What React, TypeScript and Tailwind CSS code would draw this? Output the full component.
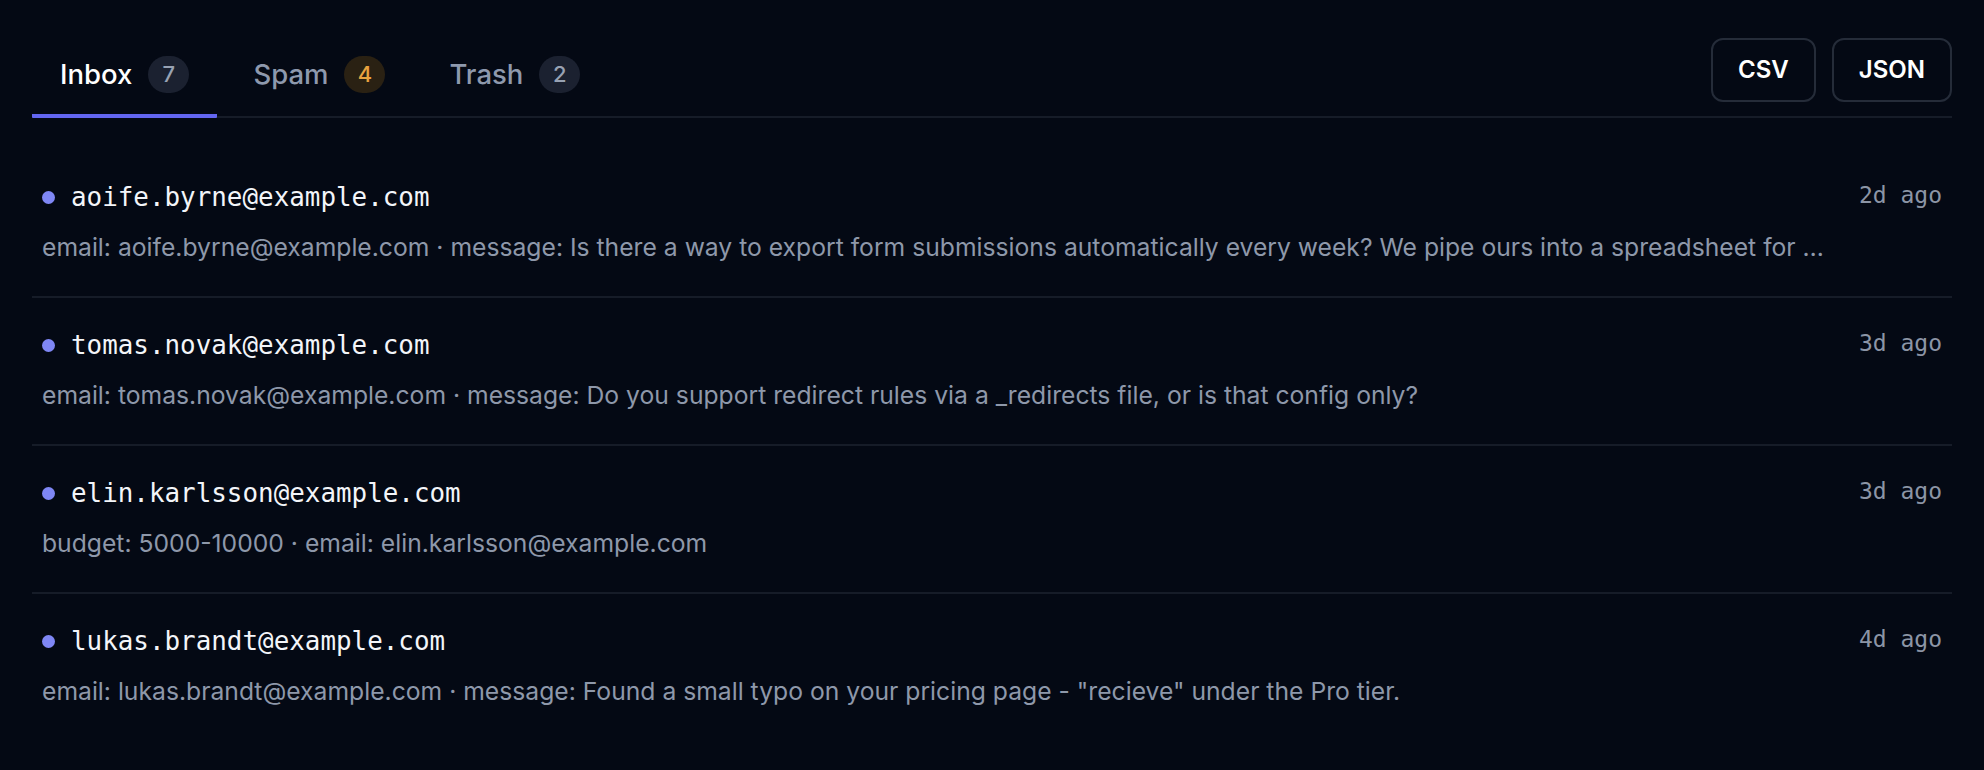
import React from "react";

type Tab = { label: string; count: number; tone: "neutral" | "amber" };

const tabs: Tab[] = [
  { label: "Inbox", count: 7, tone: "neutral" },
  { label: "Spam", count: 4, tone: "amber" },
  { label: "Trash", count: 2, tone: "neutral" },
];

type Submission = { id: number; from: string; summary: string; age: string };

const submissions: Submission[] = [
  {
    id: 1,
    from: "aoife.byrne@example.com",
    summary:
      "email: aoife.byrne@example.com · message: Is there a way to export form submissions automatically every week? We pipe ours into a spreadsheet for …",
    age: "2d ago",
  },
  {
    id: 2,
    from: "tomas.novak@example.com",
    summary:
      "email: tomas.novak@example.com · message: Do you support redirect rules via a _redirects file, or is that config only?",
    age: "3d ago",
  },
  {
    id: 3,
    from: "elin.karlsson@example.com",
    summary: "budget: 5000-10000 · email: elin.karlsson@example.com",
    age: "3d ago",
  },
  {
    id: 4,
    from: "lukas.brandt@example.com",
    summary:
      'email: lukas.brandt@example.com · message: Found a small typo on your pricing page - "recieve" under the Pro tier.',
    age: "4d ago",
  },
];

const sans = "font-['Inter','Liberation_Sans',sans-serif]";
const mono = "font-['DejaVu_Sans_Mono','Liberation_Mono',monospace]";

export default function App() {
  const active = "Inbox";

  return (
    <div className={`min-h-screen bg-[#040914] px-8 pt-8 ${sans}`}>
      {/* tabs + export buttons */}
      <div className="flex items-start justify-between border-b-2 border-[#161c28]">
        <div className="flex gap-2">
          {tabs.map((tab) => {
            const isActive = tab.label === active;
            return (
              <button
                key={tab.label}
                className={`-mb-[2px] flex items-center gap-4 border-b-4 px-7 pt-6 pb-[21px] text-[27.5px] leading-[37px] font-medium ${
                  isActive
                    ? "rounded-b-[1px] border-[#6366f1] text-white"
                    : "border-transparent text-[#8e99ad]"
                }`}
              >
                {tab.label}
                <span
                  className={`flex h-[37px] min-w-[41px] items-center justify-center rounded-full px-3 text-[22px] font-medium ${
                    tab.tone === "amber"
                      ? "bg-[#2a2113] text-[#e8a23f]"
                      : "bg-[#1b2130] text-[#98a2b3]"
                  }`}
                >
                  {tab.count}
                </span>
              </button>
            );
          })}
        </div>

        <div className="flex gap-4 pt-[6px]">
          <button className="rounded-xl border-2 border-[#252c39] px-[25px] py-[14px] text-[24px] leading-8 font-semibold text-white">
            CSV
          </button>
          <button className="rounded-xl border-2 border-[#252c39] px-[25px] py-[14px] text-[24px] leading-8 font-semibold text-white">
            JSON
          </button>
        </div>
      </div>

      {/* submission list */}
      <ul className="mt-8">
        {submissions.map((item, i) => (
          <li
            key={item.id}
            className={`px-2.5 py-8 ${
              i < submissions.length - 1 ? "border-b-2 border-[#161c28]" : ""
            }`}
          >
            <div className="flex items-center justify-between">
              <div className="flex items-center gap-4">
                <span className="h-[13px] w-[13px] rounded-full bg-[#7f87f5]" />
                <span
                  className={`${mono} text-[25.9px] leading-[30px] text-[#f3f5f9]`}
                >
                  {item.from}
                </span>
              </div>
              <span
                className={`${mono} -mt-1 text-[23px] leading-[30px] text-[#8c95a6]`}
              >
                {item.age}
              </span>
            </div>
            <p className="mt-[18px] text-[24.7px] leading-[34px] text-[#8e98aa]">
              {item.summary}
            </p>
          </li>
        ))}
      </ul>
    </div>
  );
}
